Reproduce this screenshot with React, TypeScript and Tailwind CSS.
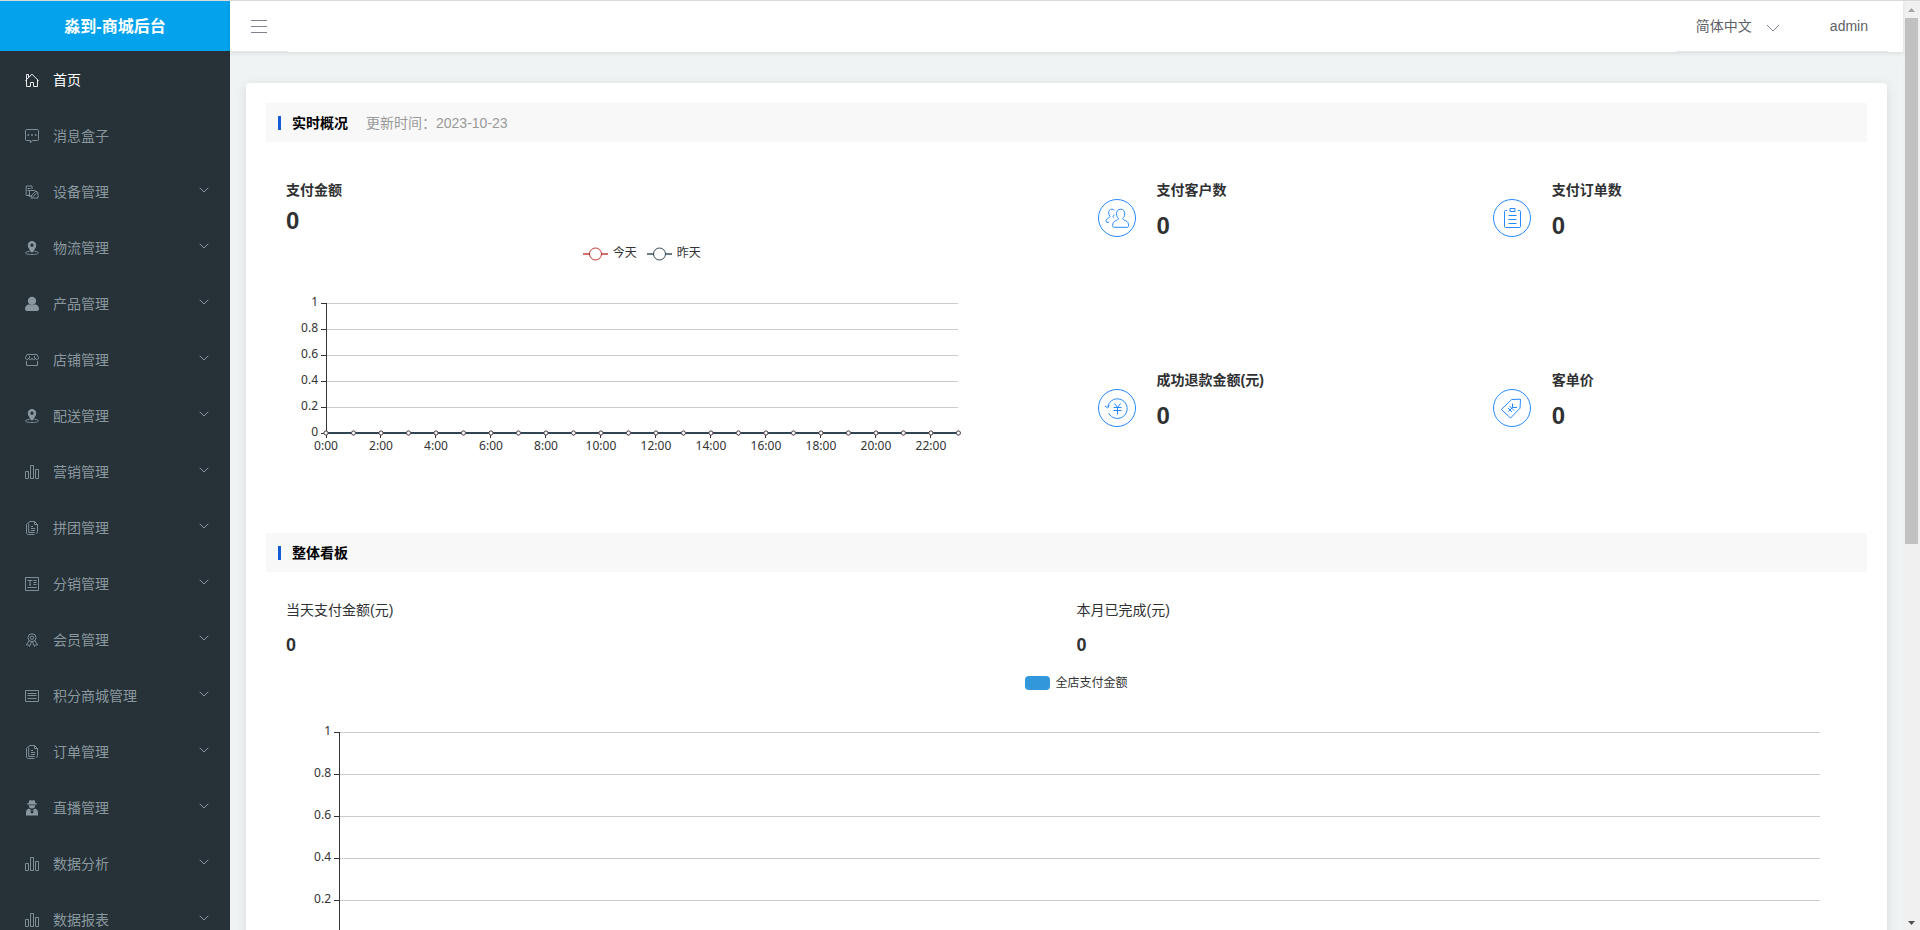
import { useState } from 'react';
import type { ReactNode } from 'react';

const ICONS: Record<string, ReactNode> = {
  home: (
    <>
      <path d="M.3 7.800 7 1.200l6.700 6.600" />
      <path d="M1.500 7v6.500h4v-4h3v4h4V7" />
      <path d="M1.500 6.500v-5h2v2.800" />
    </>
  ),
  message: (
    <>
      <path d="M1.500.5h11a1 1 0 0 1 1 1v9a1 1 0 0 1-1 1H7.800L5.500 13.600v-2.100h-4a1 1 0 0 1-1-1v-9a1 1 0 0 1 1-1z" />
      <path d="M2.500 6h1.600M6.200 6h1.600M9.900 6h1.600" strokeWidth={1.600} />
    </>
  ),
  device: (
    <>
      <path d="M4 10.500H1.200v-9.500H7v3M2.500 3.500h3M2.500 5.500h2" />
      <path d="M4.500 12V5.500h5l3.500 2v5.500H5.500" />
      <path d="m6 11 5-5 1.300 1.300-5 5zM3.500 9l3 3" />
    </>
  ),
  location: (
    <>
      <path
        d="M7 0a4.200 4.200 0 0 0-4.200 4.200C2.800 7 5 8.500 5.800 11.200h2.400C9 8.500 11.200 7 11.200 4.200A4.200 4.200 0 0 0 7 0zm0 2.600a1.600 1.600 0 1 1 0 3.200 1.600 1.600 0 0 1 0-3.200z"
        fill="currentColor"
        stroke="none"
      />
      <path d="M4.500 10.300C2 10.600.6 11.200.6 12c0 1 2.900 1.500 6.400 1.500s6.400-.5 6.400-1.500c0-.8-1.400-1.400-3.900-1.700" />
    </>
  ),
  user: (
    <g fill="currentColor" stroke="none">
      <ellipse cx="7" cy="3.900" rx="4.200" ry="4.200" />
      <path d="M3.800 7.200C1.500 8 0 9.200 0 11.800 0 13.200.8 14 2 14h10c1.200 0 2-.8 2-2.200 0-2.600-1.500-3.800-3.800-4.600-1.800 1.500-4.600 1.500-6.400 0z" />
    </g>
  ),
  shop: (
    <>
      <path d="M2 1.500h10l1.500 3.200c0 2.300-3.200 2.500-3.300.3 0 2.200-3.200 2.200-3.200 0 0 2.200-3.200 2.200-3.200 0C3.700 7.200.5 7 .5 4.700z" />
      <path d="M4.500 3v2M9.500 3v2M1.500 8v4.500h11V8" />
    </>
  ),
  bars: <path d="M.5 6.500h3v7h-3zM5.500.5h3v13h-3zM10.500 4.500h3v9h-3z" />,
  copy: (
    <>
      <path d="M3.500 2.500A2 2 0 0 1 5 .5h4.500l3 3v7a2 2 0 0 1-1.500 2M9.500.5v3h3" />
      <path d="M3 2.300c-1.200.2-1.500.8-1.500 1.700v7.500c0 1.300.7 2 2 2H9.500" />
      <path d="M3.700 3v8.500h6M6 5.500h2M6 7.500h4M6 9.500h4" />
    </>
  ),
  article: (
    <>
      <path d="M.5.5h13v13H.5z" />
      <path d="M2.500 3.500h5M5 3.500v4.500M4 8h2M8.500 3.500h3M8.500 5.500h3M8.500 7.500h3M2.500 10.500h9" />
    </>
  ),
  medal: (
    <>
      <circle cx="7" cy="4.700" r="4" />
      <circle cx="7" cy="4.700" r="1.700" />
      <path d="M4 7.800 1.300 12l2.200-.2 1 1.700L6.500 9M10 7.800l2.700 4.200-2.200-.2-1 1.700L7.500 9" />
    </>
  ),
  list: (
    <>
      <path d="M.5 1.500h13v11H.5z" />
      <path d="M2.500 4.500h9M2.500 6.500h9M2.500 9.500h9" />
    </>
  ),
  agent: (
    <g fill="currentColor" stroke="none">
      <path d="M4.300-.8h1.900l.8.500.8-.5h1.900l.6 2.800 1.700.6v1H2v-1l1.700-.6zM3.800 4.300h6.400a3.200 3.200 0 0 1-6.400 0z" />
      <path d="M4 7.500 7 9.500l3-2c2.200.8 3 2 3 4.300v2.700H1v-2.700c0-2.300.8-3.500 3-4.300z" />
      <path d="M5.300 9.500h3.400L8 12.300H6z" fill="#263238" />
    </g>
  ),
};

const MENU = [
  { label: '首页', icon: 'home' },
  { label: '消息盒子', icon: 'message' },
  { label: '设备管理', icon: 'device', children: true },
  { label: '物流管理', icon: 'location', children: true },
  { label: '产品管理', icon: 'user', children: true },
  { label: '店铺管理', icon: 'shop', children: true },
  { label: '配送管理', icon: 'location', children: true },
  { label: '营销管理', icon: 'bars', children: true },
  { label: '拼团管理', icon: 'copy', children: true },
  { label: '分销管理', icon: 'article', children: true },
  { label: '会员管理', icon: 'medal', children: true },
  { label: '积分商城管理', icon: 'list', children: true },
  { label: '订单管理', icon: 'copy', children: true },
  { label: '直播管理', icon: 'agent', children: true },
  { label: '数据分析', icon: 'bars', children: true },
  { label: '数据报表', icon: 'bars', children: true },
];

const STATS = [
  {
    label: '支付客户数',
    value: 0,
    icon: (
      <>
        <path d="M22.800 10.200c-2.700 0-4.300 1.900-4.300 4.600 0 2 .9 3.600 2 4.500-.2 1.500-1.200 1.700-2.700 2.300-2.200.9-3.200 2.300-3.200 5 0 1.100.5 1.700 1.500 1.700h13c1 0 1.500-.6 1.500-1.700 0-2.700-1-4.100-3.200-5-1.500-.6-2.400-.8-2.600-2.300 1.100-.9 2-2.500 2-4.500 0-2.700-1.500-4.600-4-4.600z" />
        <path d="M16.500 11.300c-.7-.8-1.500-1.100-2.600-1.100-2.100 0-3.300 1.500-3.300 3.600 0 1.500.6 2.700 1.400 3.400-.1 1.200-.9 1.400-1.900 2-1.300.7-1.900 1.700-1.900 3.300 0 .5.300.800.900.800h2M16 15.500c0 .8-.4 1.500-.9 2 .1.700.4 1 .9 1.300" />
      </>
    ),
  },
  {
    label: '支付订单数',
    value: 0,
    icon: (
      <>
        <path d="M14 11.500h-1.500a1 1 0 0 0-1 1v15a1 1 0 0 0 1 1h14a1 1 0 0 0 1-1v-15a1 1 0 0 0-1-1H25" />
        <path d="M17 9.500h5v3h-5zM15.500 16.500h8M15.500 20.500h8M15.500 24.500h8" />
      </>
    ),
  },
  {
    label: '成功退款金额(元)',
    value: 0,
    icon: (
      <>
        <path d="M9.800 17.500a9.800 9.800 0 1 1 .8 6.500M7 17l2.700 2 1.600-3" />
        <path d="m16.500 14.500 3 4 3-4M19.500 18.500v7M15.500 18.500h8M15.500 21.500h8" />
      </>
    ),
  },
  {
    label: '客单价',
    value: 0,
    icon: (
      <>
        <path d="m8.300 20.500 10.400-10 8.800-.300-.500 9-9.400 9.800z" strokeLinejoin="round" />
        <path d="M19.500 14.500v4h4.500M19.500 18.500l-4.200 4.200M16.500 17l4.500 4.500M15 19l4 4" />
      </>
    ),
  },
];

const HOURS = Array.from({ length: 24 }, (_, i) => `${i}:00`);
const Y_LABELS = ['1', '0.8', '0.6', '0.4', '0.2', '0'];

function Chevron({ className }: { className: string }) {
  return (
    <svg className={className} viewBox="0 0 14 8" fill="none" stroke="currentColor" aria-hidden="true">
      <path d="m1 1 6 6 6-6" vectorEffect="non-scaling-stroke" />
    </svg>
  );
}

// The svg is the plot area only, axis labels overflow it
function Chart({ step, categories = [] }: { step: number; categories?: string[] }) {
  const height = step * 5;
  const last = categories.length - 1;
  return (
    <svg
      className="block w-full overflow-visible font-['Noto_Sans','Noto_Sans_CJK_SC',sans-serif] text-xs"
      height={height}
      fill="#333"
    >
      {Y_LABELS.map((label, i) => (
        <g key={label}>
          <g shapeRendering="crispEdges">
            <line x1="0" x2="100%" y1={i * step} y2={i * step} stroke={label === '0' ? '#333' : '#ccc'} />
            <line x1="-5" x2="0" y1={i * step} y2={i * step} stroke="#333" />
          </g>
          <text x="-8" y={i * step + 3} textAnchor="end">
            {label}
          </text>
        </g>
      ))}
      <line x1="0" x2="0" y1="0" y2={height} stroke="#333" shapeRendering="crispEdges" />
      {categories.length > 0 && (
        <line x1="0" x2="100%" y1={height} y2={height} stroke="#2f4554" strokeWidth="2" />
      )}
      {categories.map((label, i) => {
        const x = `${(i / last) * 100}%`;
        return (
          <g key={label}>
            {i % 2 === 0 && (
              <>
                <line x1={x} x2={x} y1={height} y2={height + 5} stroke="#333" shapeRendering="crispEdges" />
                <text x={x} y={height + 17} textAnchor="middle">
                  {label}
                </text>
              </>
            )}
            <circle cx={x} cy={height} r="2" fill="#fff" stroke="#c23531" />
            <circle cx={x} cy={height} r="2" fill="#fff" stroke="#2f4554" strokeOpacity="0.8" />
          </g>
        );
      })}
    </svg>
  );
}

function LineLegend({ label, color }: { label: string; color: string }) {
  return (
    <span className="flex items-center gap-[5px]">
      <svg className="mt-0.5" width="25" height="14" stroke={color} fill="#fff">
        <path d="M0 7h25" strokeWidth="2" opacity="0.7" />
        <circle cx="12.500" cy="7" r="6" />
      </svg>
      {label}
    </span>
  );
}

function SectionTitle({ title, extra }: { title: string; extra?: string }) {
  return (
    <div className="flex h-[39px] items-center bg-[#f8f8f8] px-3 text-sm">
      <span className="mr-[11px] h-3.5 w-[3px] bg-[#155bd4]" />
      <h2 className="font-bold text-black">{title}</h2>
      {extra && <span className="ml-[18px] text-[#999]">{extra}</span>}
    </div>
  );
}

function Sidebar() {
  const [active, setActive] = useState('首页');
  return (
    <aside className="flex w-[230px] shrink-0 flex-col overflow-hidden bg-[#263238]">
      <h1 className="mb-px flex h-[50px] shrink-0 items-center justify-center bg-[#02a2ec] pt-0.5 text-base font-bold text-white">
        淼到-商城后台
      </h1>
      <nav>
        {MENU.map((item) => (
          <button
            key={item.label}
            type="button"
            onClick={() => setActive(item.label)}
            className={`flex h-14 w-full items-center pr-[21px] pl-[25px] text-left text-sm ${
              active === item.label ? 'text-white' : 'text-[#8a979e]'
            }`}
          >
            <svg
              className="mr-3.5 h-3.5 w-3.5 shrink-0 overflow-visible"
              viewBox="0 0 14 14"
              fill="none"
              stroke="currentColor"
              strokeWidth={0.9}
              aria-hidden="true"
            >
              {ICONS[item.icon]}
            </svg>
            <span className="flex-1">{item.label}</span>
            {item.children && <Chevron className="mb-1 w-2.5" />}
          </button>
        ))}
      </nav>
    </aside>
  );
}

function Header() {
  return (
    <header className="z-10 flex h-[51px] shrink-0 items-start justify-between bg-white pr-[15px] text-sm text-[#606266] shadow-[0_2px_4px_rgba(0,0,0,0.08)]">
      <button
        type="button"
        aria-label="折叠菜单"
        className="flex h-[51px] w-[58px] items-center border-b border-[#e4e8e8] pl-[21px] text-[#808391]"
      >
        <svg width="16" height="14" fill="none" stroke="currentColor" aria-hidden="true" shapeRendering="crispEdges">
          <path d="M0 1.500h16M0 7.500h16M0 13.500h16" />
        </svg>
      </button>
      <div className="flex h-[51px] items-center border-b border-[#e4e8e8] pr-5 pl-5">
        <label className="flex items-center">
          <select aria-label="语言" className="w-[70px] appearance-none bg-transparent">
            <option>简体中文</option>
            <option>English</option>
          </select>
          <Chevron className="mt-1 w-3.5 text-[#808391]" />
        </label>
        <button type="button" className="ml-[50px]">
          admin
        </button>
      </div>
    </header>
  );
}

function Scrollbar() {
  return (
    <div className="flex w-[17px] shrink-0 flex-col items-center bg-[#f0f0f0]" aria-hidden="true">
      <svg width="17" height="17" fill="#a3a3a3">
        <path d="M5 11h7L8.500 7z" />
      </svg>
      <div className="h-[calc(57%-4px)] w-[13px] bg-[#c1c1c1]" />
      <svg className="mt-auto" width="17" height="17" fill="#505050">
        <path d="M5 8h7l-3.500 4z" />
      </svg>
    </div>
  );
}

export default function App() {
  return (
    <div className="flex h-screen overflow-hidden border-t border-[#d9d9d9] bg-[#eff3f4] font-['Liberation_Sans','Noto_Sans_CJK_SC',sans-serif] text-[#303133]">
      <Sidebar />
      <div className="flex min-w-0 flex-1 flex-col">
        <Header />
        <main className="flex-1 overflow-y-auto px-4 pt-[31px] pb-4 [scrollbar-width:none]">
          <div className="rounded bg-white p-5 shadow-[0_2px_12px_rgba(0,0,0,0.1)]">
            <section>
              <SectionTitle title="实时概况" extra="更新时间：2023-10-23" />
              <div className="grid grid-cols-2 pt-[38px] pl-5">
                <div className="pb-[100px]">
                  <p className="text-sm font-bold">支付金额</p>
                  <p className="mt-1.5 text-2xl leading-[30px] font-bold">0</p>
                  <div className="pr-[15%] pl-[5%]">
                    <div className="mt-[9px] mb-[42px] flex justify-center gap-2.5 text-xs text-[#333]">
                      <LineLegend label="今天" color="#c23531" />
                      <LineLegend label="昨天" color="#2f4554" />
                    </div>
                    <Chart step={26} categories={HOURS} />
                  </div>
                </div>
                <ul className="grid grid-cols-2 grid-rows-[190px_auto]">
                  {STATS.map((stat) => (
                    <li key={stat.label} className="flex items-start gap-[21px] pl-[21px]">
                      <svg
                        className="mt-[19px] shrink-0"
                        width="38"
                        height="38"
                        fill="none"
                        stroke="#2589ff"
                        aria-hidden="true"
                      >
                        <circle cx="19" cy="19" r="18.500" />
                        {stat.icon}
                      </svg>
                      <div>
                        <p className="text-sm font-bold">{stat.label}</p>
                        <p className="mt-[11px] text-2xl leading-[30px] font-bold">{stat.value}</p>
                      </div>
                    </li>
                  ))}
                </ul>
              </div>
            </section>

            <section>
              <SectionTitle title="整体看板" />
              <div className="pt-7 pb-12 pl-5">
                <div className="grid grid-cols-2">
                  <div>
                    <p className="text-sm">当天支付金额(元)</p>
                    <p className="mt-[13px] text-lg leading-6 font-bold">0</p>
                  </div>
                  <div>
                    <p className="text-sm">本月已完成(元)</p>
                    <p className="mt-[13px] text-lg leading-6 font-bold">0</p>
                  </div>
                </div>
                <div className="mt-[18px] mb-[41px] flex items-center justify-center gap-[5px] text-xs text-[#333]">
                  <span className="h-3.5 w-[25px] rounded bg-[#3398db]" />
                  全店支付金额
                </div>
                <div className="pr-[3%] pl-[53px]">
                  <Chart step={42} />
                </div>
              </div>
            </section>
          </div>
        </main>
      </div>
      <Scrollbar />
    </div>
  );
}
